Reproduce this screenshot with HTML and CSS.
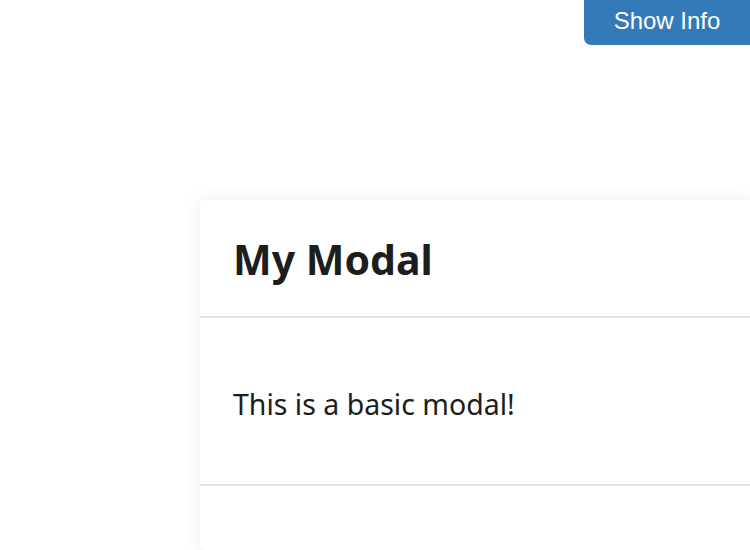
FILE: index.html
```html
<!DOCTYPE html>
<html>
<head>
<meta charset="utf-8">
<link rel="stylesheet" href="styles.css">
</head>
<body>
<div class="topbar">
  <button class="info-btn">Show Info</button>
</div>
<div class="modal">
  <div class="modal-header"><h2 class="modal-title">My Modal</h2></div>
  <div class="modal-body"><p class="modal-text">This is a basic modal!</p></div>
  <div class="modal-footer"></div>
</div>
</body>
</html>
```

FILE: styles.css
```css
html, body {
  margin: 0;
  padding: 0;
  background: #fff;
  overflow: hidden;
  height: 550px;
}
.topbar {
  display: flex;
  justify-content: flex-end;
  height: 45px;
}
.info-btn {
  width: 166px;
  height: 45px;
  border: none;
  background: #337ab7;
  color: #fff;
  font-family: "Liberation Sans", Arial, sans-serif;
  font-size: 24px;
  line-height: 42px;
  padding: 0 0 3px;
  border-radius: 0 0 0 7px;
}
.modal {
  margin: 155px 0 0 200px;
  width: 550px;
  height: 350px;
  background: #fff;
  border-radius: 4px 0 0 6px;
  box-shadow: 0 0 18px rgba(0, 0, 0, 0.08);
  font-family: "Noto Sans", sans-serif;
  color: #1d1d1d;
}
.modal-header {
  height: 118px;
  border-bottom: 2px solid #e2e2e2;
  box-sizing: border-box;
  display: flex;
  align-items: center;
  padding: 2px 0 0 33px;
}
.modal-title {
  margin: 0;
  font-size: 41px;
  font-weight: 700;
}
.modal-body {
  height: 168px;
  border-bottom: 2px solid #e2e2e2;
  box-sizing: border-box;
  padding: 5px 33px 0;
  display: flex;
  align-items: center;
}
.modal-text {
  margin: 0;
  font-size: 28.5px;
}
```
